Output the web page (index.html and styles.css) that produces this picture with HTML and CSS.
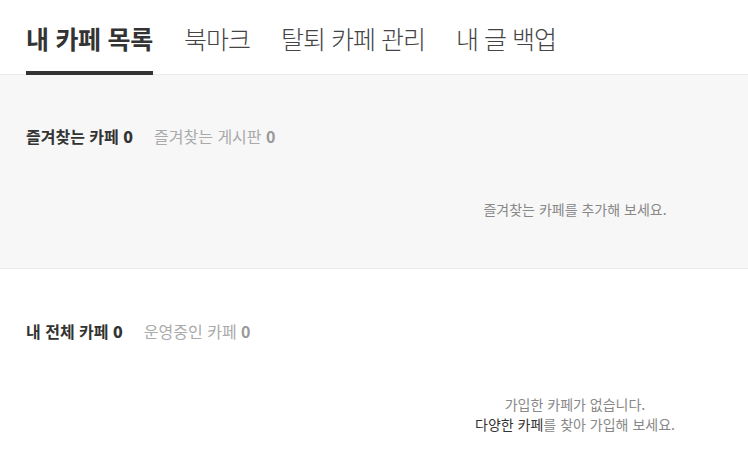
FILE: index.html
```html
<!DOCTYPE html>
<html lang="ko">
<head>
    <meta charset="UTF-8">
    <meta name="viewport" content="width=device-width, initial-scale=1.0">
    <title>내 카페 목록</title>
    <link rel="stylesheet" href="styles.css">
</head>
<body>
    <nav class="tabs">
        <a href="#" class="tab active">내 카페 목록</a>
        <a href="#" class="tab">북마크</a>
        <a href="#" class="tab">탈퇴 카페 관리</a>
        <a href="#" class="tab">내 글 백업</a>
    </nav>

    <section class="cafe-section favorite">
        <div class="section-title">
            <a href="#" class="title-item active">즐겨찾는 카페 <b>0</b></a>
            <a href="#" class="title-item">즐겨찾는 게시판 <b>0</b></a>
        </div>
        <div class="empty-message">
            <p>즐겨찾는 카페를 추가해 보세요.</p>
        </div>
    </section>

    <section class="cafe-section joined">
        <div class="section-title">
            <a href="#" class="title-item active">내 전체 카페 <b>0</b></a>
            <a href="#" class="title-item">운영중인 카페 <b>0</b></a>
        </div>
        <div class="empty-message">
            <p>가입한 카페가 없습니다.</p>
            <p><a href="#" class="link">다양한 카페</a>를 찾아 가입해 보세요.</p>
        </div>
    </section>
</body>
</html>
```

FILE: styles.css
```css
* {
    margin: 0;
    padding: 0;
    box-sizing: border-box;
}

body {
    font-family: "Noto Sans CJK KR", "Noto Sans", sans-serif;
    background: white;
    color: #333;
    overflow: hidden;
}

a {
    text-decoration: none;
    color: inherit;
}

/* 상단 탭 */
.tabs {
    display: flex;
    gap: 31px;
    padding: 0 26px;
    height: 75px;
    border-bottom: 1px solid #ebebeb;
}

.tab {
    font-size: 25px;
    line-height: 34px;
    padding-top: 21px;
    height: 75px;
    color: #444;
    font-weight: 300;
    letter-spacing: -1px;
    border-bottom: 4px solid transparent;
}

.tab.active {
    color: #333;
    font-weight: bold;
    letter-spacing: -0.3px;
    border-bottom-color: #333;
}

/* 카페 섹션 */
.cafe-section {
    padding: 51px 26px 49px;
}

.cafe-section.favorite {
    background: #f7f7f7;
    border-bottom: 1px solid #ebebeb;
}

.cafe-section.joined {
    padding-top: 52px;
    padding-bottom: 0;
}

.section-title {
    display: flex;
    gap: 21px;
    font-size: 16px;
    line-height: 20px;
}

.title-item {
    color: #aaa;
}

.title-item b {
    color: #999;
}

.title-item.active {
    color: #333;
    font-weight: bold;
}

.title-item.active b {
    color: #333;
}

.empty-message {
    margin: 53px 0 0 402px;
    text-align: center;
    font-size: 14px;
    line-height: 20px;
    color: #888;
}

.joined .empty-message {
    margin-top: 53px;
}

.empty-message .link {
    color: #333;
}
```
